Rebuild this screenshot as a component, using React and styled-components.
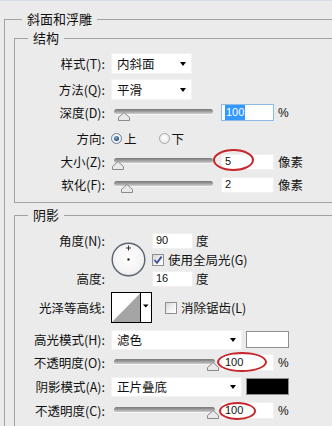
import React from "react";
import styled, { createGlobalStyle } from "styled-components";

const GlobalStyle = createGlobalStyle`
  html, body { margin: 0; padding: 0; overflow: hidden; background: #ebebeb; }
  body { font-family: "Noto Sans CJK SC", "Noto Sans", sans-serif; color: #111; }
  * { box-sizing: border-box; }
`;

const Page = styled.div`
  width: 332px;
  height: 426px;
  overflow: hidden;
  background: #ebebeb;
  border-top: 1px solid #d6dde5;
  padding: 10px 0 0 4px;
`;

const Outer = styled.fieldset`
  margin: 0;
  width: 380px;
  min-width: 0;
  height: 460px;
  border: 1px solid #a2a2a2;
  border-right: none;
  border-bottom: none;
  padding: 3px 0 0 9px;
`;

const Group = styled.fieldset`
  margin: ${(p) => p.$mt || 0}px 0 0 0;
  min-width: 0;
  border: 1px solid #a2a2a2;
  border-right: none;
  border-bottom: ${(p) => (p.$open ? "none" : "1px solid #a2a2a2")};
  padding: ${(p) => p.$pt}px 0 6px 0;
`;

const Legend = styled.legend`
  font-size: 13px;
  line-height: 16px;
  padding: 0 5px;
  margin-left: ${(p) => p.$ml}px;
  color: #111;
`;

const Row = styled.div`
  display: flex;
  align-items: center;
  height: ${(p) => p.$h || 23}px;
  margin-top: ${(p) => p.$mt || 0}px;
`;

const Label = styled.div`
  width: 90px;
  margin-right: 6px;
  text-align: right;
  font-size: 12.5px;
  line-height: 16px;
  white-space: nowrap;
  flex-shrink: 0;
`;

const Select = styled.div`
  position: relative;
  width: ${(p) => p.$w}px;
  height: ${(p) => p.$h || 21}px;
  background: #fff;
  border: 1px solid #f2f2f2;
  font-size: 12.5px;
  line-height: 16px;
  display: flex;
  align-items: center;
  padding-left: 5px;
  &::after {
    content: "";
    position: absolute;
    right: 5px;
    top: 50%;
    margin-top: -2px;
    border-left: 3.5px solid transparent;
    border-right: 3.5px solid transparent;
    border-top: 4px solid #000;
  }
`;

const Swatch = styled.div`
  width: 43px;
  height: 17px;
  margin-left: 4px;
  background: ${(p) => p.$color};
  border: 1px solid #8f8f8f;
`;

const SliderBox = styled.div`
  position: relative;
  width: 106px;
  height: 16px;
  flex-shrink: 0;
`;

const Track = styled.div`
  position: absolute;
  left: 3px;
  right: ${(p) => (p.$long ? 2 : 4)}px;
  top: 4px;
  height: 5px;
  border-radius: 3px;
  background: linear-gradient(#777 0%, #9a9a9a 45%, #cfcfcf 100%);
  box-shadow: 0 1px 0 #f6f6f6;
`;

const Thumb = styled.svg`
  position: absolute;
  top: 7px;
  left: ${(p) => p.$x}px;
`;

const ValueBox = styled.div`
  position: relative;
  width: 53px;
  height: ${(p) => p.$h || 17}px;
  margin-left: 4px;
  background: #fff;
  border: 1px solid ${(p) => (p.$focus ? "#8bbbe8" : "#f0f0f0")};
  font-family: "Liberation Sans", Arial, sans-serif;
  font-size: 11px;
  line-height: 13px;
  display: flex;
  align-items: center;
  padding-left: 3px;
  color: #111;
`;

const SmallBox = styled(ValueBox)`
  width: 41px;
  margin-left: 0;
  height: 16px;
`;

const Selected = styled.span`
  background: #3399ff;
  color: #fff;
  padding: 1px 1px;
`;

const Unit = styled.span`
  margin-left: ${(p) => p.$ml ?? 4}px;
  font-size: ${(p) => (p.$latin ? 12 : 12.5)}px;
  font-family: ${(p) =>
    p.$latin ? '"Liberation Sans", Arial, sans-serif' : 'inherit'};
  line-height: 16px;
  white-space: nowrap;
`;

const Ellipse = styled.div`
  position: absolute;
  left: ${(p) => p.$l}px;
  top: ${(p) => p.$t}px;
  width: ${(p) => p.$w}px;
  height: ${(p) => p.$h}px;
  border: 2px solid #c7262b;
  border-radius: 50%;
  pointer-events: none;
`;

const Radio = styled.span`
  width: 11px;
  height: 11px;
  border-radius: 50%;
  border: 1px solid ${(p) => (p.$on ? "#6f7f90" : "#a6a6a6")};
  background: radial-gradient(circle at 50% 40%, #ffffff 0%, #e4e4e4 100%);
  display: flex;
  align-items: center;
  justify-content: center;
  margin-left: ${(p) => p.$ml || 0}px;
  flex-shrink: 0;
  &::after {
    content: "";
    display: ${(p) => (p.$on ? "block" : "none")};
    width: 5px;
    height: 5px;
    border-radius: 50%;
    background: radial-gradient(circle at 40% 35%, #7fb0dc 0%, #2c5a86 60%, #173a5c 100%);
  }
`;

const RadioText = styled.span`
  margin-left: 2px;
  font-size: 12.5px;
  line-height: 16px;
`;

const AngleGrid = styled.div`
  display: grid;
  grid-template-columns: 90px 35px auto;
  grid-template-rows: 19px 19px 19px;
  column-gap: 6px;
  align-items: center;
`;

const GridLabel = styled(Label)`
  grid-column: 1;
  grid-row: ${(p) => p.$row};
  margin-right: 0;
`;

const Dial = styled.svg`
  grid-column: 2;
  grid-row: 1 / 4;
  align-self: center;
`;

const Cell = styled.div`
  grid-column: 3;
  grid-row: ${(p) => p.$row};
  display: flex;
  align-items: center;
`;

const Check = styled.span`
  width: 12px;
  height: 12px;
  border: 1px solid #8e8f8f;
  background: linear-gradient(135deg, #d6d6d6 0%, #f4f4f4 60%, #ffffff 100%);
  display: flex;
  align-items: center;
  justify-content: center;
  margin-left: ${(p) => p.$ml || 0}px;
  flex-shrink: 0;
`;

const CheckText = styled.span`
  margin-left: 4px;
  font-size: 12.5px;
  line-height: 16px;
  white-space: nowrap;
`;

function Slider({ x, long }) {
  return (
    <SliderBox>
      <Track $long={long} />
      <Thumb $x={x} width="12" height="9" viewBox="0 0 12 9">
        <path d="M0.5 8.5 L0.5 5.5 L6 0.5 L11.5 5.5 L11.5 8.5 Z" fill="#e9e9e9" stroke="#8a8a8a" strokeWidth="1" />
      </Thumb>
    </SliderBox>
  );
}

function CheckMark() {
  return (
    <svg width="10" height="10" viewBox="0 0 10 10">
      <path d="M1.5 5 L4 7.8 L8.6 1.6" fill="none" stroke="#3b4f93" strokeWidth="1.8" />
    </svg>
  );
}

export default function App() {
  return (
    <>
      <GlobalStyle />
      <Page>
        <Outer>
          <Legend $ml={8}>斜面和浮雕</Legend>
          <Group $pt={6}>
            <Legend $ml={13}>结构</Legend>
            <Row>
              <Label>样式(T):</Label>
              <Select $w={81}>内斜面</Select>
            </Row>
            <Row $mt={3}>
              <Label>方法(Q):</Label>
              <Select $w={81}>平滑</Select>
            </Row>
            <Row>
              <Label>深度(D):</Label>
              <Slider x={7} />
              <ValueBox $focus>
                <Selected>100</Selected>
              </ValueBox>
              <Unit $latin>%</Unit>
            </Row>
            <Row $mt={3}>
              <Label>方向:</Label>
              <Radio $on />
              <RadioText>上</RadioText>
              <Radio $ml={22} />
              <RadioText>下</RadioText>
            </Row>
            <Row>
              <Label>大小(Z):</Label>
              <Slider x={1} />
              <ValueBox $h={16}>
                5
                <Ellipse $l={-9} $t={-6} $w={41} $h={22} />
              </ValueBox>
              <Unit>像素</Unit>
            </Row>
            <Row>
              <Label>软化(F):</Label>
              <Slider x={10} />
              <ValueBox $h={16}>2</ValueBox>
              <Unit>像素</Unit>
            </Row>
          </Group>

          <Group $mt={4} $pt={8} $open>
            <Legend $ml={13}>阴影</Legend>
            <AngleGrid>
              <GridLabel $row={1}>角度(N):</GridLabel>
              <GridLabel $row={3}>高度:</GridLabel>
              <Dial width="35" height="35" viewBox="0 0 35 35">
                <defs>
                  <radialGradient id="dialfill" cx="50%" cy="45%" r="60%">
                    <stop offset="0%" stopColor="#ffffff" />
                    <stop offset="75%" stopColor="#f3f3f3" />
                    <stop offset="100%" stopColor="#d9d9d9" />
                  </radialGradient>
                </defs>
                <circle cx="17.5" cy="17.5" r="16.3" fill="url(#dialfill)" stroke="#5b6470" strokeWidth="1.4" />
                <path d="M17.5 3.5 V8.5 M15 6 H20" stroke="#333" strokeWidth="1" />
                <rect x="16.5" y="16.5" width="2" height="2" fill="#000" />
              </Dial>
              <Cell $row={1}>
                <SmallBox>90</SmallBox>
                <Unit $ml={3}>度</Unit>
              </Cell>
              <Cell $row={2}>
                <Check>
                  <CheckMark />
                </Check>
                <CheckText>使用全局光(G)</CheckText>
              </Cell>
              <Cell $row={3}>
                <SmallBox>16</SmallBox>
                <Unit $ml={3}>度</Unit>
              </Cell>
            </AngleGrid>

            <Row $h={31} $mt={4}>
              <Label>光泽等高线:</Label>
              <svg width="41" height="31" viewBox="0 0 41 31">
                <rect x="0.5" y="0.5" width="40" height="30" fill="#fff" stroke="#000" />
                <polygon points="1,30 29.5,1 29.5,30" fill="#a5a5a5" />
                <line x1="29.5" y1="0.5" x2="29.5" y2="30.5" stroke="#000" />
                <polygon points="32,12.5 37.5,12.5 34.75,15.5" fill="#000" />
              </svg>
              <Check $ml={13} />
              <CheckText>消除锯齿(L)</CheckText>
            </Row>

            <Row $mt={5}>
              <Label>高光模式(H):</Label>
              <Select $w={131} $h={20}>滤色</Select>
              <Swatch $color="#ffffff" />
            </Row>
            <Row>
              <Label>不透明度(O):</Label>
              <Slider x={96} long />
              <ValueBox>
                100
                <Ellipse $l={-5} $t={-3} $w={50} $h={20} />
              </ValueBox>
              <Unit $latin>%</Unit>
            </Row>
            <Row $mt={1}>
              <Label>阴影模式(A):</Label>
              <Select $w={131} $h={20}>正片叠底</Select>
              <Swatch $color="#000000" />
            </Row>
            <Row $mt={1}>
              <Label>不透明度(C):</Label>
              <Slider x={96} long />
              <ValueBox>
                100
                <Ellipse $l={-3} $t={-1} $w={37} $h={18} />
              </ValueBox>
              <Unit $latin>%</Unit>
            </Row>
          </Group>
        </Outer>
      </Page>
    </>
  );
}
